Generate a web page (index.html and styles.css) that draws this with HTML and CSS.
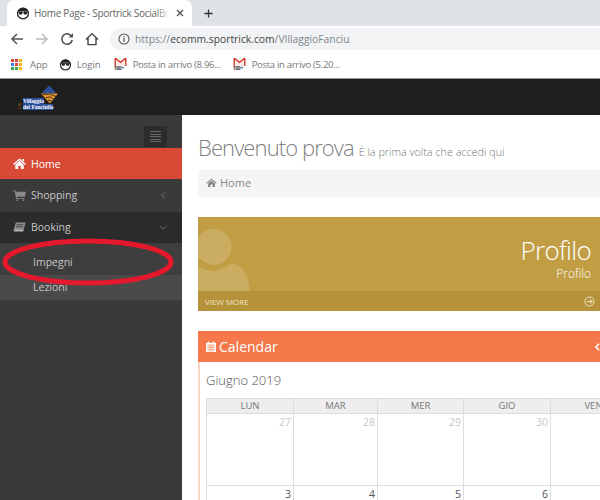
FILE: index.html
```html
<!doctype html>
<html lang="en">

<head>
	<title>Home Page - Sportrick SocialBooking</title>
	<meta charset="UTF-8">
	<link rel="stylesheet" href="styles.css">
</head>

<body>
	<div class="Tabstrip">
		<div class="Tab">
			<svg class="Favicon" viewBox="0 0 14 14">
				<circle cx="7" cy="7.5" r="5.4" fill="#fff" stroke="#222" stroke-width="1.3" />
				<path d="M2.4 5 C3 0.6 11 0.6 11.6 5 Z" fill="#222" />
				<path d="M1.2 6 H12.8" stroke="#222" stroke-width="0.9" />
				<rect x="3" y="5.6" width="3.4" height="2.8" rx="1" fill="#222" />
				<rect x="7.6" y="5.6" width="3.4" height="2.8" rx="1" fill="#222" />
			</svg>
			<span class="TabTitle">Home Page - Sportrick SocialBooking</span>
			<span class="TabFade"></span>
			<svg class="TabClose" viewBox="0 0 8 8"><path d="M1 1 L7 7 M7 1 L1 7" stroke="#555" stroke-width="1.4" /></svg>
		</div>
		<svg class="NewTab" viewBox="0 0 10 10"><path d="M5 0.5 V9.5 M0.5 5 H9.5" stroke="#333" stroke-width="1.4" /></svg>
	</div>

	<div class="Toolbar">
		<svg class="Nav" viewBox="0 0 14 14"><path d="M13 7 H2 M7 2 L2 7 L7 12" fill="none" stroke="#555" stroke-width="1.5" /></svg>
		<svg class="Nav" viewBox="0 0 14 14"><path d="M1 7 H12 M7 2 L12 7 L7 12" fill="none" stroke="#b9bcc0" stroke-width="1.5" /></svg>
		<svg class="Nav" viewBox="0 0 14 14"><path d="M11.6 4.4 A5.2 5.2 0 1 0 12.2 8" fill="none" stroke="#555" stroke-width="1.6" /><path d="M8.6 5.4 H13 V1 Z" fill="#555" /></svg>
		<svg class="Nav" viewBox="0 0 14 14"><path d="M1 7.4 L7 1.6 L13 7.4 M3 6 V12.6 H11 V6" fill="none" stroke="#444" stroke-width="1.4" /></svg>
		<div class="Omnibox">
			<svg class="Info" viewBox="0 0 12 12"><circle cx="6" cy="6" r="5" fill="none" stroke="#555" stroke-width="1.1" /><path d="M6 5 V9 M6 3 V4.2" stroke="#555" stroke-width="1.2" /></svg>
			<span class="Url">https://<b>ecomm.sportrick.com</b>/VIllaggioFanciu</span>
		</div>
	</div>

	<div class="Bookmarks">
		<div class="Mark AppMark">
			<svg class="Apps" viewBox="0 0 11 11">
				<rect x="0" y="0" width="3" height="3" fill="#e0453a" /><rect x="4" y="0" width="3" height="3" fill="#e0453a" /><rect x="8" y="0" width="3" height="3" fill="#f2b01e" />
				<rect x="0" y="4" width="3" height="3" fill="#3d7fe6" /><rect x="4" y="4" width="3" height="3" fill="#e0453a" /><rect x="8" y="4" width="3" height="3" fill="#f2b01e" />
				<rect x="0" y="8" width="3" height="3" fill="#34a853" /><rect x="4" y="8" width="3" height="3" fill="#34a853" /><rect x="8" y="8" width="3" height="3" fill="#f2b01e" />
			</svg>
			App
		</div>
		<div class="Mark LoginMark">
			<svg class="Favicon" viewBox="0 0 14 14">
				<circle cx="7" cy="7.5" r="5.4" fill="#fff" stroke="#222" stroke-width="1.3" />
				<path d="M2.4 5 C3 0.6 11 0.6 11.6 5 Z" fill="#222" />
				<path d="M1.2 6 H12.8" stroke="#222" stroke-width="0.9" />
				<rect x="3" y="5.6" width="3.4" height="2.8" rx="1" fill="#222" />
				<rect x="7.6" y="5.6" width="3.4" height="2.8" rx="1" fill="#222" />
			</svg>
			Login
		</div>
		<div class="Mark Mail">
			<span class="Gmail">
				<svg viewBox="0 0 12 8"><path d="M0.7 8 V0.7 H1.5 L6 4.4 L10.5 0.7 H11.3 V8" fill="#fbe9e7" stroke="#d33b2c" stroke-width="1.4" /></svg>
				<span class="Count">100+</span>
			</span>
			Posta in arrivo (8.96...
		</div>
		<div class="Mark Mail">
			<span class="Gmail">
				<svg viewBox="0 0 12 8"><path d="M0.7 8 V0.7 H1.5 L6 4.4 L10.5 0.7 H11.3 V8" fill="#fbe9e7" stroke="#d33b2c" stroke-width="1.4" /></svg>
				<span class="Count">100+</span>
			</span>
			Posta in arrivo (5.20...
		</div>
	</div>

	<div class="Topbar">
		<div class="Logo">
			<span class="Cbl">CRL</span>
			<div class="LogoText">
				<span>Villaggio</span>
				<span>del Fanciullo</span>
			</div>
			<svg class="LogoMark" viewBox="0 0 18 18">
				<path d="M9 0 L16 7 L9 9 L2 7 Z" fill="#2a4f96" />
				<path d="M1 8 H18 L10 18 Z" fill="#e6952c" />
				<path d="M3 9 Q10 7 16 11 M6 12 Q11 10 14 14 M8 15 Q10 14 12 16" fill="none" stroke="#1e1e1e" stroke-width="0.8" />
			</svg>
		</div>
	</div>

	<div class="Shell">
		<div class="Sidebar">
			<div class="SideTop">
				<div class="Burger"><i></i><i></i><i></i><i></i><i></i></div>
			</div>
			<div class="SideItem Active">
				<svg class="SideIcon" viewBox="0 0 14 12"><path d="M7 0.5 L14 6.6 L13 7.6 L7 2.4 L1 7.6 L0 6.6 Z M2.4 7.4 L7 3.4 L11.6 7.4 V12 H8.4 V8.6 H5.6 V12 H2.4 Z M10 1 H12 V4 L10 2.4 Z" fill="#fff" /></svg>
				Home
			</div>
			<div class="SideItem Shop">
				<svg class="SideIcon" viewBox="0 0 14 12"><path d="M0 0.6 H2.6 L3 2 H14 L12.8 7.4 H4.2 L4.5 8.6 H12.6 V9.6 H3.4 L1.8 1.6 H0 Z" fill="#8b8b8b" /><circle cx="4.6" cy="11" r="1" fill="#8b8b8b" /><circle cx="11.4" cy="11" r="1" fill="#8b8b8b" /></svg>
				Shopping
				<svg class="Chevron" viewBox="0 0 6 10"><path d="M5 1 L1 5 L5 9" fill="none" stroke="#777" stroke-width="1.1" /></svg>
			</div>
			<div class="SideItem Open">
				<svg class="SideIcon" viewBox="0 0 14 12"><path d="M3 0.5 H13.6 L11 10.5 H1.6 Q0.2 10.5 0.6 8.6 Z" fill="#8b8b8b" /><path d="M3.8 3 H11 M3.2 5.2 H10.4" stroke="#2b2b2b" stroke-width="0.8" /><path d="M1.8 9 H11.2" stroke="#ccc" stroke-width="0.9" /></svg>
				Booking
				<svg class="Chevron Down" viewBox="0 0 10 6"><path d="M1 1 L5 5 L9 1" fill="none" stroke="#777" stroke-width="1.1" /></svg>
			</div>
			<div class="SubItem">Impegni</div>
			<div class="SubItem Hover">Lezioni</div>
		</div>

		<div class="Main">
			<h1 class="PageTitle">Benvenuto prova <small>È la prima volta che accedi qui</small></h1>
			<div class="Crumb">
				<svg class="CrumbIcon" viewBox="0 0 14 12"><path d="M7 0.5 L14 6.6 L13 7.6 L7 2.4 L1 7.6 L0 6.6 Z M2.4 7.4 L7 3.4 L11.6 7.4 V12 H8.4 V8.6 H5.6 V12 H2.4 Z" fill="#888" /></svg>
				Home
			</div>

			<div class="Banner">
				<div class="BannerTop">
					<svg class="BannerUser" viewBox="0 0 52 62">
						<path fill="#fff" d="M0 9 A18 18 0 1 1 17 36 Q8 36 0 28 Z M0 37 Q17 48 34 34 Q50 38 52 62 H0 Z" />
					</svg>
					<div class="BannerText">
						<div class="BannerBig">Profilo</div>
						<div class="BannerSmall">Profilo</div>
					</div>
				</div>
				<div class="BannerFoot">
					VIEW MORE
					<svg class="MoreIcon" viewBox="0 0 12 12"><circle cx="6" cy="6" r="5" fill="none" stroke="#f3e7c8" stroke-width="1" /><path d="M3 6 H9 M6.6 3.6 L9 6 L6.6 8.4" fill="none" stroke="#f3e7c8" stroke-width="1" /></svg>
				</div>
			</div>

			<div class="Panel">
				<div class="PanelHead">
					<svg class="CalIcon" viewBox="0 0 11 12"><path d="M0 2 H2 V0.5 H3.5 V2 H7.5 V0.5 H9 V2 H11 V12 H0 Z" fill="#fff" /><path d="M1 4.5 H10 M1 7 H10 M1 9.5 H10 M3.5 4 V11.5 M5.5 4 V11.5 M7.5 4 V11.5" stroke="#f4784a" stroke-width="0.6" /></svg>
					Calendar
					<svg class="PanelBack" viewBox="0 0 6 10"><path d="M5 1 L1 5 L5 9" fill="none" stroke="#fff" stroke-width="2" /></svg>
				</div>
				<div class="PanelBody">
					<div class="Month">Giugno 2019</div>
					<div class="Calendar">
						<div class="DayName">LUN</div>
						<div class="DayName">MAR</div>
						<div class="DayName">MER</div>
						<div class="DayName">GIO</div>
						<div class="DayName">VEN</div>
						<div class="Day Other">27</div>
						<div class="Day Other">28</div>
						<div class="Day Other">29</div>
						<div class="Day Other">30</div>
						<div class="Day"></div>
						<div class="Day">3</div>
						<div class="Day">4</div>
						<div class="Day">5</div>
						<div class="Day">6</div>
						<div class="Day"></div>
					</div>
				</div>
			</div>
		</div>
	</div>

	<svg class="Circle" viewBox="0 0 180 52">
		<ellipse cx="88" cy="26" rx="83" ry="21" fill="none" stroke="#e5182c" stroke-width="5" />
	</svg>
</body>

</html>
```

FILE: styles.css
```css
html,
body {
	margin: 0;
	height: 500px;
	overflow: hidden;
}

body {
	position: relative;
	width: 600px;
	font-family: "Open Sans", sans-serif;
	background-color: white;
}

svg {
	display: block;
	flex: none;
}

/* browser window */
.Tabstrip {
	display: flex;
	align-items: center;
	height: 26px;
	padding-left: 7px;
	background-color: #dee1e6;
}

.Tab {
	display: flex;
	align-items: center;
	width: 185px;
	height: 26px;
	box-sizing: border-box;
	padding-left: 9px;
	background-color: white;
	border-radius: 7px 7px 0 0;
	font-size: 10px;
	letter-spacing: -0.3px;
	color: #666;
}

.Favicon {
	width: 14px;
	height: 14px;
}

.TabTitle {
	margin-left: 4px;
	width: 136px;
	overflow: hidden;
	white-space: nowrap;
}

.TabFade {
	width: 14px;
	height: 20px;
	margin-left: -14px;
	background: linear-gradient(to right, rgba(255, 255, 255, 0), white);
}

.TabClose {
	width: 8px;
	height: 8px;
	margin-left: 6px;
}

.NewTab {
	width: 9px;
	height: 9px;
	margin-left: 12px;
}

.Toolbar {
	display: flex;
	align-items: center;
	height: 25px;
	padding-left: 10px;
}

.Nav {
	width: 14px;
	height: 14px;
	margin-right: 11px;
}

.Omnibox {
	display: flex;
	align-items: center;
	flex: 1;
	height: 22px;
	padding-left: 8px;
	background-color: #f1f3f4;
	border-radius: 11px 0 0 11px;
	font-size: 10.3px;
	color: #80868b;
}

.Info {
	width: 12px;
	height: 12px;
	margin-right: 5px;
}

.Url {
	white-space: nowrap;
}

.Url b {
	font-weight: normal;
	color: #444;
}

.Bookmarks {
	display: flex;
	align-items: center;
	height: 28px;
	padding-left: 11px;
	border-bottom: 1px solid #999;
	box-sizing: border-box;
	font-size: 9.5px;
	color: #777;
}

.Mark {
	display: flex;
	align-items: center;
	gap: 6px;
	margin-right: 13px;
	white-space: nowrap;
}

.AppMark {
	margin-right: 11px;
}

.LoginMark {
	gap: 5px;
}

.Mark .Favicon {
	width: 13px;
	height: 13px;
}

.Apps {
	width: 11px;
	height: 11px;
	margin-right: 2px;
}

.Mail {
	width: 107px;
	margin-right: 12px;
	letter-spacing: -0.3px;
}

.Gmail {
	display: block;
	width: 13px;
}

.Gmail svg {
	width: 13px;
	height: 8px;
}

.Count {
	display: block;
	font-size: 5px;
	line-height: 5px;
	font-weight: bold;
	color: #333;
}

/* site */
.Topbar {
	display: flex;
	align-items: center;
	height: 36px;
	padding-left: 17px;
	background-color: #1e1e1e;
}

.Logo {
	display: flex;
	align-items: flex-end;
	height: 26px;
}

.Cbl {
	writing-mode: vertical-rl;
	transform: rotate(180deg);
	font-size: 4px;
	color: #b8762c;
	margin-right: 1px;
	margin-bottom: 1px;
}

.LogoText {
	display: flex;
	flex-direction: column;
	font-family: "Liberation Serif", serif;
	font-size: 5.5px;
	line-height: 6px;
	font-weight: bold;
	color: white;
}

.LogoText span {
	background-color: #2d4f9c;
	white-space: nowrap;
	align-self: flex-start;
}

.LogoMark {
	width: 18px;
	height: 19px;
	margin-left: -13px;
	margin-bottom: 6px;
}

.Shell {
	display: flex;
	height: 385px;
	overflow: hidden;
}

.Sidebar {
	flex: none;
	width: 182px;
	background-color: #3a3a3a;
	font-size: 10.5px;
	color: #c5c5c5;
}

.SideTop {
	display: flex;
	justify-content: flex-end;
	align-items: flex-end;
	height: 33px;
	padding-right: 15px;
	box-sizing: border-box;
}

.Burger {
	display: flex;
	flex-direction: column;
	justify-content: center;
	gap: 1.5px;
	box-sizing: border-box;
	width: 23px;
	height: 21px;
	margin-bottom: 1px;
	padding: 0 6px;
	background-color: #2c2c2c;
}

.Burger i {
	display: block;
	height: 1px;
	background-color: #666;
}

.SideItem {
	display: flex;
	align-items: center;
	box-sizing: border-box;
	height: 32px;
	padding-left: 13px;
	white-space: nowrap;
}

.SideItem.Active {
	height: 31px;
	background-color: #d84a35;
	color: white;
}

.SideItem.Shop {
	height: 33px;
	padding-bottom: 1px;
}

.SideItem.Open {
	height: 31px;
	padding-bottom: 1px;
	background-color: #2b2b2b;
}

.SideIcon {
	width: 13px;
	height: 11px;
	margin-right: 5px;
}

.Chevron {
	width: 5px;
	height: 9px;
	margin-left: auto;
	margin-right: 16px;
}

.Chevron.Down {
	width: 8px;
	height: 5px;
	margin-right: 15px;
}

.SubItem {
	height: 32px;
	padding-left: 33px;
	line-height: 38px;
	background-color: #3e3e3e;
}

.SubItem.Hover {
	height: 25px;
	line-height: 25px;
	background-color: #4a4a4a;
}

.Main {
	flex: none;
	width: 408px;
	padding-left: 16px;
}

.PageTitle {
	margin: 18px 0 0 0;
	height: 37px;
	font-size: 22px;
	line-height: 28px;
	font-weight: 300;
	letter-spacing: -0.9px;
	color: #808080;
}

.PageTitle small {
	font-size: 10.8px;
	font-weight: 300;
	letter-spacing: 0;
	color: #777;
}

.Crumb {
	display: flex;
	align-items: center;
	height: 27px;
	padding: 0 0 2px 8px;
	box-sizing: border-box;
	background-color: #f5f5f5;
	font-size: 11px;
	color: #888;
}

.CrumbIcon {
	width: 11px;
	height: 9px;
	margin-right: 3px;
}

.Banner {
	margin-top: 20px;
	height: 94px;
	display: flex;
	flex-direction: column;
	background-color: #c19d44;
	color: white;
}

.BannerTop {
	display: flex;
	justify-content: space-between;
	height: 74px;
	padding-right: 15px;
	overflow: hidden;
}

.BannerUser {
	width: 52px;
	height: 62px;
	align-self: flex-end;
	opacity: 0.16;
}

.BannerText {
	text-align: right;
	font-weight: 300;
}

.BannerBig {
	margin-top: 17px;
	font-size: 26px;
	line-height: 32px;
	letter-spacing: -0.7px;
}

.BannerSmall {
	font-size: 12px;
	line-height: 15px;
	font-weight: 300;
}

.BannerFoot {
	display: flex;
	justify-content: space-between;
	align-items: center;
	height: 20px;
	padding: 0 11px 0 7px;
	background-color: #b6923a;
	font-size: 8px;
	color: #efe3c2;
}

.MoreIcon {
	width: 11px;
	height: 11px;
}

.Panel {
	margin-top: 20px;
	border-left: 2px solid #f9d6c8;
}

.PanelHead {
	display: flex;
	align-items: center;
	height: 31px;
	margin-left: -2px;
	padding-left: 8px;
	background-color: #f4784a;
	font-size: 14px;
	color: white;
}

.CalIcon {
	width: 10px;
	height: 11px;
	margin-right: 3px;
}

.PanelBack {
	width: 5px;
	height: 8px;
	margin-left: auto;
	margin-right: 6px;
}

.PanelBody {
	padding-left: 6px;
}

.Month {
	height: 36px;
	font-size: 13px;
	line-height: 36px;
	font-weight: 300;
	color: #555;
}

.Calendar {
	display: grid;
	grid-template-columns: 87px 84px 86px 87px 86px;
	grid-template-rows: 15px 72px 60px;
	border-top: 1px solid #ddd;
	border-left: 1px solid #ddd;
	font-size: 10.5px;
}

.DayName {
	background-color: #eee;
	border-right: 1px solid #ddd;
	border-bottom: 1px solid #ddd;
	line-height: 14px;
	text-align: center;
	font-size: 9.5px;
	color: #777;
}

.Day {
	border-right: 1px solid #ddd;
	border-bottom: 1px solid #ddd;
	padding: 2px 2px 0 0;
	line-height: 12px;
	text-align: right;
	color: #555;
}

.Day.Other {
	color: #c8c8c8;
}

/* the hand drawn ring over the sidebar */
.Circle {
	position: absolute;
	left: 0;
	top: 236px;
	width: 180px;
	height: 52px;
}
```
